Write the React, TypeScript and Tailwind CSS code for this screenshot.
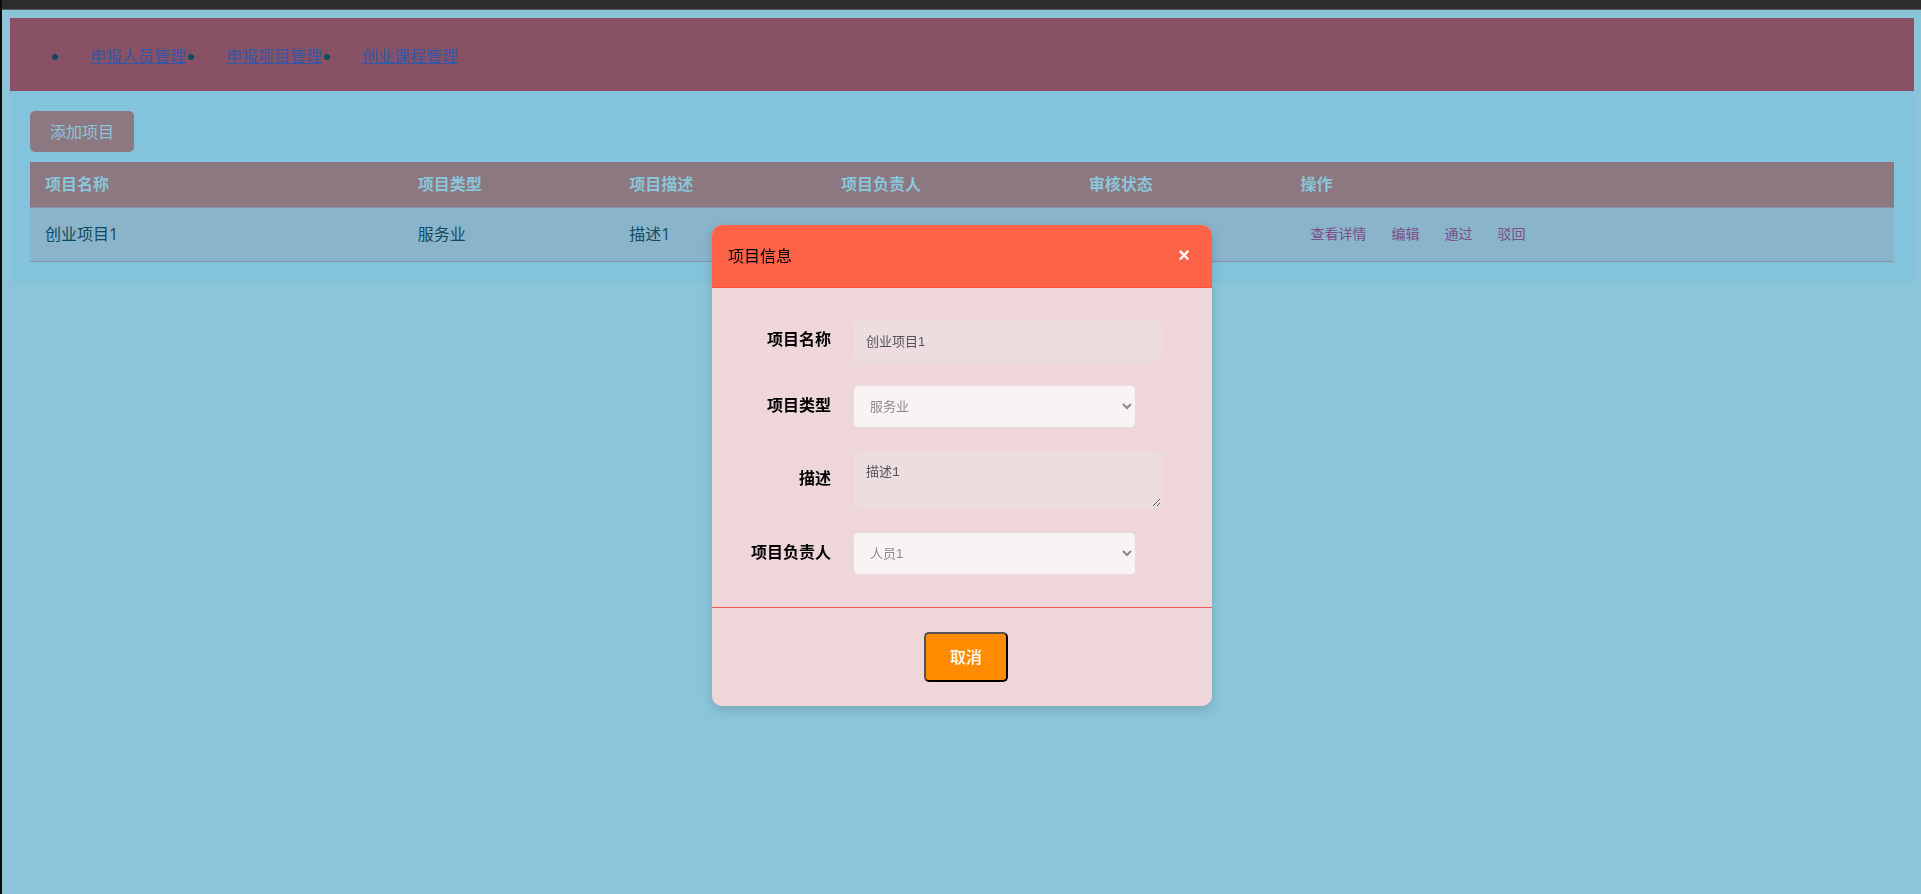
import React from "react";

const links = ["申报人员管理", "申报项目管理", "创业课程管理"];
const columns = [
  { title: "项目名称", width: "w-[20%]" },
  { title: "项目类型", width: "w-[11.35%]" },
  { title: "项目描述", width: "w-[11.35%]" },
  { title: "项目负责人", width: "w-[13.3%]" },
  { title: "审核状态", width: "w-[11.35%]" },
  { title: "操作", width: "" },
];
const actions = ["查看详情", "编辑", "通过", "驳回"];

const labelClass = "pb-[2px] text-right text-base leading-6 font-bold text-black";
const textClass =
  "w-full rounded-[5px] border border-[#e2dde0] bg-[#eddddf] px-3 text-[13px] text-[#545454]";
const selectClass =
  "h-[43px] w-[283px] rounded-[5px] border border-[#e2dde0] bg-[#f9f3f3] px-3 text-[13px] text-[#8f8b8b] opacity-100";

function ProjectDialog() {
  return (
    <div className="fixed inset-0 flex items-start justify-center pt-[225px] pl-[3px]">
      <div
        role="dialog"
        aria-labelledby="dialog-title"
        className="w-[500px] overflow-hidden rounded-[10px] bg-[#eed6d9] shadow-[0_4px_12px_rgba(0,0,0,0.15)]"
      >
        <header className="flex h-[63px] items-center justify-between border-b border-[#ff5140] bg-[#ff6347] pr-[22px] pl-4">
          <h2 id="dialog-title" className="pt-[2px] text-base text-black">
            项目信息
          </h2>
          <button type="button" aria-label="关闭" className="pb-[2px] text-xl leading-6 font-bold text-white">
            ×
          </button>
        </header>
        <form className="grid grid-cols-[119px_1fr] items-center gap-x-[22px] gap-y-6 py-8 pr-[50px]">
          <label htmlFor="name" className={labelClass}>
            项目名称
          </label>
          <input id="name" type="text" readOnly value="创业项目1" className={`h-[41px] ${textClass}`} />
          <label htmlFor="type" className={labelClass}>
            项目类型
          </label>
          <select id="type" disabled className={selectClass}>
            <option>服务业</option>
          </select>
          <label htmlFor="description" className={labelClass}>
            描述
          </label>
          <textarea
            id="description"
            readOnly
            value="描述1"
            className={`block h-14 resize py-[10px] leading-5 font-[Liberation_Mono,Noto_Sans_CJK_SC,monospace] ${textClass}`}
          />
          <label htmlFor="owner" className={labelClass}>
            项目负责人
          </label>
          <select id="owner" disabled className={selectClass}>
            <option>人员1</option>
          </select>
        </form>
        <footer className="flex justify-center border-t border-[#ed5a58] py-6 pl-2">
          <button
            type="button"
            className="h-[50px] w-[84px] rounded-[5px] border-2 border-t-[#555555] border-r-black border-b-black border-l-[#555555] bg-[#ff8c00] pt-[2px] text-base font-medium text-white"
          >
            取消
          </button>
        </footer>
      </div>
    </div>
  );
}

export default function App() {
  return (
    <div className="flex min-h-screen flex-col border-l-2 border-[#0c0c0c] bg-[#8bc5da] font-[Liberation_Sans,Noto_Sans_CJK_SC,sans-serif]">
      <div className="h-[10px] border-b border-[#585858] bg-[#2c2c2c]" />
      <div className="pt-2 pr-[7px] pl-2">
        <nav className="bg-[#885264] px-5 pt-[26px] pb-[23px] font-[Open_Sans,Noto_Sans_CJK_SC,sans-serif]">
          <ul className="flex list-disc pl-10 text-[#114b62]">
            {links.map((link) => (
              <li key={link} className="px-5 leading-6">
                <a href="#" className="text-[#3457a8] underline">
                  {link}
                </a>
              </li>
            ))}
          </ul>
        </nav>
        <main className="bg-[#84c3dc] p-5">
          <button type="button" className="mb-[10px] block h-[41px] rounded-[5px] bg-[#8b7880] px-5 pt-[2px] text-base text-[#8bc5da]">
            添加项目
          </button>
          <table className="w-full table-fixed border-collapse text-left font-[Open_Sans,Noto_Sans_CJK_SC,sans-serif] text-base">
            <thead>
              <tr className="h-[45px] border-b border-[#8a93a8] bg-[#8b7880] text-[#8bc5da]">
                {columns.map((column) => (
                  <th key={column.title} className={`px-[15px] py-0 leading-6 font-bold ${column.width}`}>
                    {column.title}
                  </th>
                ))}
              </tr>
            </thead>
            <tbody>
              <tr className="h-[54px] border-b border-[#8a93a8] bg-[#89b4ca] text-[#114b62]">
                <td className="px-[15px] leading-6">创业项目1</td>
                <td className="px-[15px] leading-6">服务业</td>
                <td className="px-[15px] leading-6">描述1</td>
                <td className="px-[15px] leading-6">人员1</td>
                <td className="px-[15px] leading-6"></td>
                <td className="px-[15px]">
                  <div className="flex gap-[25px] pl-[10px] text-sm">
                    {actions.map((action) => (
                      <button key={action} type="button" className="text-[#7c4f87]">
                        {action}
                      </button>
                    ))}
                  </div>
                </td>
              </tr>
            </tbody>
          </table>
        </main>
      </div>
      <ProjectDialog />
    </div>
  );
}
